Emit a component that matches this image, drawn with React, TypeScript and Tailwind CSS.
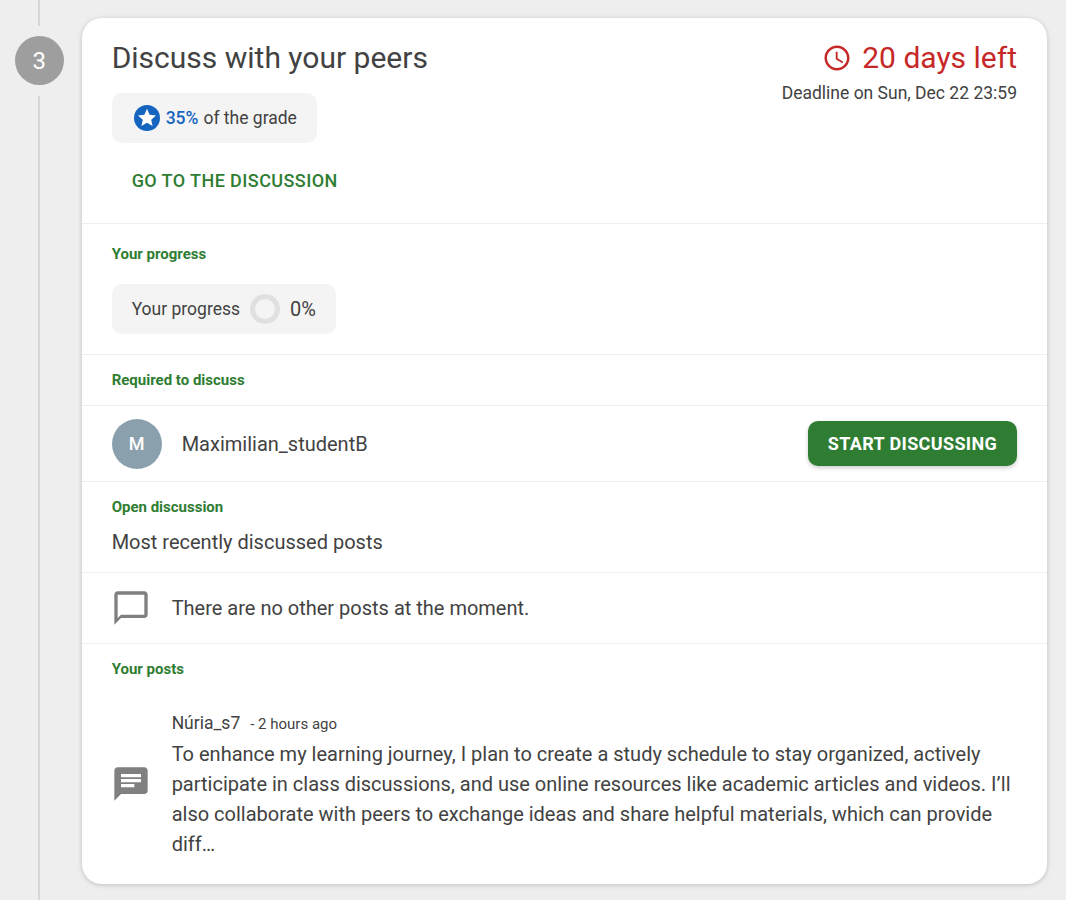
import React from "react";

const font = { fontFamily: "Roboto, sans-serif" };

function SectionLabel({ children }: { children: React.ReactNode }) {
  return <p className="text-[15px] font-bold leading-5 text-[#2e7d32]">{children}</p>;
}

function ChatIcon({ d }: { d: string }) {
  return (
    <svg className="h-10 w-10 shrink-0 fill-[#808080]" viewBox="0 0 24 24">
      <path d={d} />
    </svg>
  );
}

export default function App() {
  return (
    <div
      className="flex h-[900px] items-stretch overflow-hidden bg-[#eeeeee] pl-[14.67px] pt-[18px] text-[#424242]"
      style={font}
    >
      <div className="-mt-[18px] flex w-[49.33px] shrink-0 flex-col items-center">
        <div className="h-[26px] w-0.5 bg-[#d6d6d6]" />
        <div className="mt-2.5 mb-[10.67px] flex h-[49.33px] w-[49.33px] shrink-0 items-center justify-center rounded-full bg-[#9e9e9e] text-2xl text-white">
          3
        </div>
        <div className="w-0.5 flex-1 bg-[#d6d6d6]" />
      </div>

      <div className="ml-[17.67px] h-[866px] w-[965.33px] shrink-0 rounded-[20px] bg-white shadow-[0_1px_5px_rgba(0,0,0,0.2)]">
        <div className="flex h-[206px] justify-between border-b border-[#eeeeee] px-[30px] pt-[20px]">
          <div>
            <h2 className="text-[30px] leading-10 font-normal">Discuss with your peers</h2>
            <div className="mt-[15px] flex h-[50px] w-[205px] items-center rounded-[10px] bg-[#f4f4f4] pl-[22px] text-[17.5px]">
              <svg className="mr-1.5 h-[26px] w-[26px]" viewBox="0 0 26 26">
                <circle cx="13" cy="13" r="13" fill="#1565c0" />
                <path
                  fill="#fff"
                  d="M13 3.8l2.6 6 6.4.6-4.8 4.3 1.4 6.4-5.6-3.4-5.6 3.4 1.4-6.4L4 10.4l6.4-.6z"
                />
              </svg>
              <span className="font-medium text-[#1565c0]">35%</span>
              <span className="ml-[5px]">of the grade</span>
            </div>
            <button className="mt-[25px] ml-5 block text-lg leading-[26px] font-medium tracking-[0.42px] text-[#2e7d32]">
              GO TO THE DISCUSSION
            </button>
          </div>
          <div className="flex flex-col items-end">
            <div className="flex items-center text-[#c62828]">
              <svg className="mr-2.5 h-[30px] w-[30px] fill-current" viewBox="0 0 24 24">
                <path d="M11.99 2C6.47 2 2 6.48 2 12s4.47 10 9.99 10C17.52 22 22 17.52 22 12S17.52 2 11.99 2zM12 20c-4.42 0-8-3.58-8-8s3.58-8 8-8 8 3.58 8 8-3.58 8-8 8zm.5-13H11v6l5.25 3.15.75-1.23-4.5-2.67z" />
              </svg>
              <span className="text-[30px] leading-10">20 days left</span>
            </div>
            <p className="mt-[2px] text-[17.5px] leading-[26px]">Deadline on Sun, Dec 22 23:59</p>
          </div>
        </div>

        <div className="h-[131px] border-b border-[#eeeeee] px-[30px] pt-5">
          <SectionLabel>Your progress</SectionLabel>
          <div className="mt-5 flex h-[50px] w-[224px] items-center rounded-[10px] bg-[#f4f4f4] pl-5">
            <span className="text-[17.5px]">Your progress</span>
            <span className="mx-2.5 h-[30px] w-[30px] rounded-full border-[5px] border-[#e0e0e0]" />
            <span className="text-xl">0%</span>
          </div>
        </div>

        <div className="flex h-[51px] items-start border-b border-[#eeeeee] px-[30px] pt-[15px]">
          <SectionLabel>Required to discuss</SectionLabel>
        </div>

        <div className="flex h-[76px] items-center justify-between border-b border-[#eeeeee] px-[30px]">
          <div className="flex items-center">
            <div className="flex h-[50px] w-[50px] items-center justify-center rounded-full bg-[#8aa0ad] text-lg font-medium text-white">
              M
            </div>
            <span className="ml-5 text-xl">Maximilian_studentB</span>
          </div>
          <button className="h-[45px] w-[209px] rounded-[10px] bg-[#2e7d32] text-lg font-bold tracking-[0.36px] text-white shadow-[0_2px_4px_rgba(0,0,0,0.2)]">
            START DISCUSSING
          </button>
        </div>

        <div className="h-[91px] border-b border-[#eeeeee] px-[30px] pt-[15px]">
          <SectionLabel>Open discussion</SectionLabel>
          <p className="mt-[10px] text-xl leading-[30px]">Most recently discussed posts</p>
        </div>

        <div className="flex h-[71px] items-center border-b border-[#eeeeee] pl-[29.67px]">
          <ChatIcon d="M20 2H4c-1.1 0-2 .9-2 2v18l4-4h14c1.1 0 2-.9 2-2V4c0-1.1-.9-2-2-2zm0 14H6l-2 2V4h16v12z" />
          <span className="ml-[20.33px] text-xl">There are no other posts at the moment.</span>
        </div>

        <div className="px-[30px] pt-[15px]">
          <SectionLabel>Your posts</SectionLabel>
          <div className="mt-[29px] flex items-center">
            <div className="-ml-[0.33px]">
              <ChatIcon d="M20 2H4c-1.1 0-1.99.9-1.99 2L2 22l4-4h14c1.1 0 2-.9 2-2V4c0-1.1-.9-2-2-2zM6 9h12v2H6V9zm8 5H6v-2h8v2zm4-6H6V6h12v2z" />
            </div>
            <div className="ml-[20.33px] min-w-0 flex-1">
              <p className="flex items-baseline leading-[30px]">
                <span className="text-[17.5px]">Núria_s7</span>
                <span className="ml-2.5 text-[15px]">- 2 hours ago</span>
              </p>
              <p className="text-xl leading-[30px]">
                To enhance my learning journey, I plan to create a study schedule to stay organized, actively
                participate in class discussions, and use online resources like academic articles and videos. I’ll
                also collaborate with peers to exchange ideas and share helpful materials, which can provide diff…
              </p>
            </div>
          </div>
        </div>
      </div>
    </div>
  );
}
